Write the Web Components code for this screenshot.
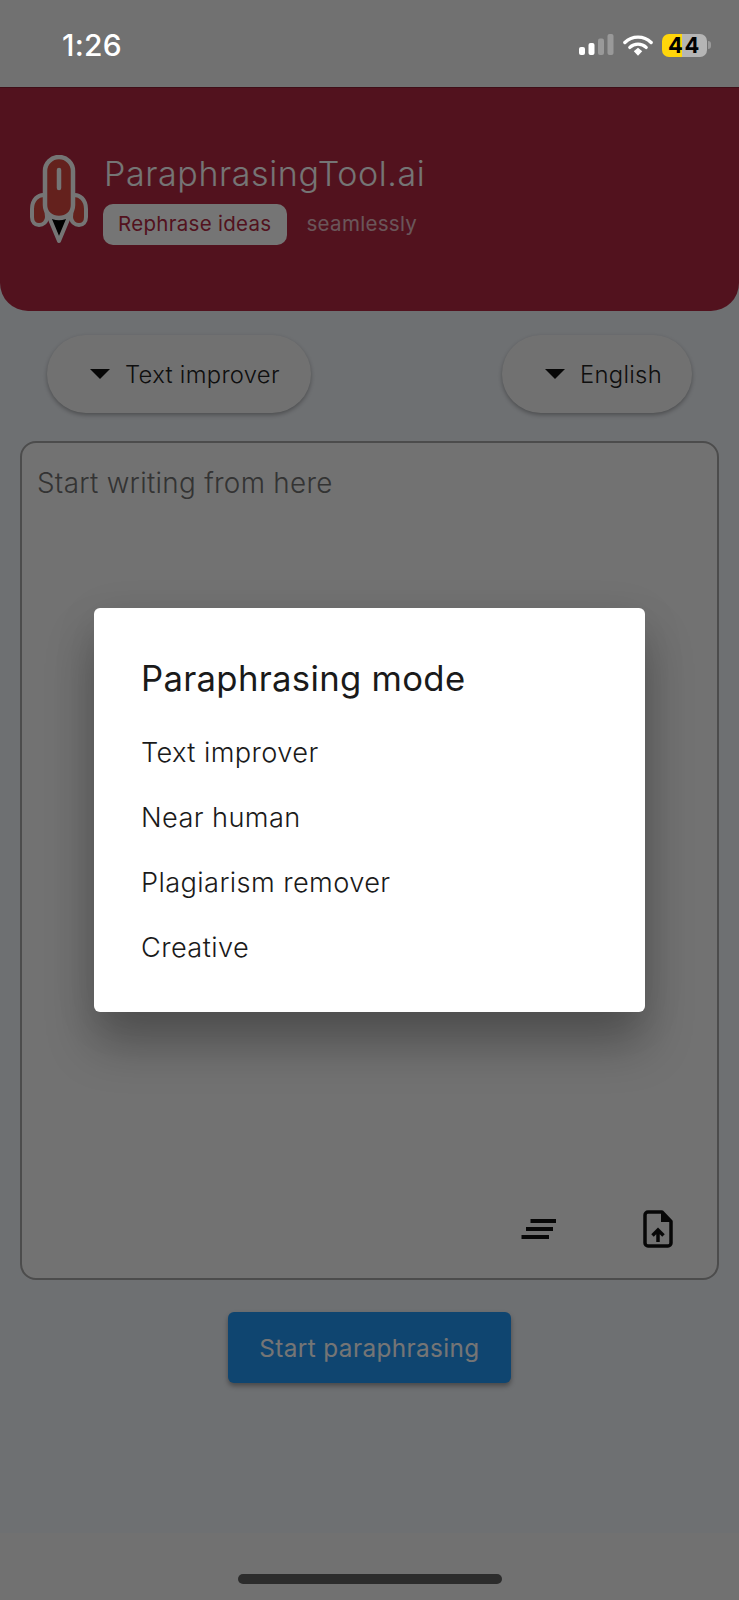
<!DOCTYPE html>
<html lang="en"><head><meta charset="utf-8"><title>ParaphrasingTool.ai</title>
<style>
html,body{margin:0;padding:0;background:#eff3f8}
body{font-family:Inter,"Liberation Sans",sans-serif;width:739px;height:1600px;overflow:hidden}
</style></head><body>
<app-screen>
  <status-bar slot="status" time="1:26" level="44"></status-bar>
  <brand-header slot="header" title-text="ParaphrasingTool.ai" chip="Rephrase ideas" tail="seamlessly"></brand-header>
  <div slot="tools" style="display:contents">
    <drop-pill label="Text improver" style="width:264px"></drop-pill>
    <drop-pill label="English" style="width:190px"></drop-pill>
  </div>
  <text-panel slot="panel" placeholder="Start writing from here"></text-panel>
  <primary-button slot="action" label="Start paraphrasing"></primary-button>
  <home-bar slot="home"></home-bar>
  <modal-scrim slot="modal">
    <mode-dialog heading="Paraphrasing mode">
      <mode-option>Text improver</mode-option>
      <mode-option>Near human</mode-option>
      <mode-option>Plagiarism remover</mode-option>
      <mode-option>Creative</mode-option>
    </mode-dialog>
  </modal-scrim>
</app-screen>
<script>
function def(name, render){
  customElements.define(name, class extends HTMLElement{
    constructor(){super();this.attachShadow({mode:'open'});}
    connectedCallback(){this.shadowRoot.innerHTML=render(this);}
  });
}
def('app-screen',()=>`<style>
:host{display:flex;flex-direction:column;position:relative;width:739px;height:1600px;background:#eff3f8;overflow:hidden}
.tools{display:flex;justify-content:space-between;padding:24px 47px 28px}
.panelwrap{padding:0 20px 0 20px}
.action{display:flex;justify-content:center;padding-top:32px;flex:1}
</style>
<slot name="status"></slot><slot name="header"></slot>
<div class="tools"><slot name="tools"></slot></div>
<div class="panelwrap"><slot name="panel"></slot></div>
<div class="action"><slot name="action"></slot></div>
<slot name="home"></slot><slot name="modal"></slot>`);

def('status-bar',el=>`<style>
:host{display:flex;align-items:center;justify-content:space-between;height:87px;background:#717171;position:relative;z-index:3;box-sizing:border-box;padding:0 28px 0 62px;color:#fff}
.time{font:500 30px/1 Inter,"Liberation Sans",sans-serif;margin-top:3px;letter-spacing:.2px}
.right{display:flex;align-items:center;margin-top:3px}
svg{display:block}
.bat{position:relative;width:45px;height:23px;border-radius:7px;background:linear-gradient(90deg,#ffd60a 0 20px,#b5b5b5 20px);margin-left:9px;display:flex;align-items:center;justify-content:center;color:#000;font:700 22px/1 Inter,"Liberation Sans",sans-serif;letter-spacing:1.500px}
.nub{width:3px;height:8px;background:#9a9a9a;border-radius:0 3px 3px 0;margin-left:1px}
</style>
<span class="time">${el.getAttribute('time')}</span>
<div class="right">
<svg width="35" height="22" viewBox="0 0 35 22"><rect x="0" y="13" width="6" height="8" rx="2" fill="#fff"/><rect x="9.500" y="9" width="6" height="12" rx="2" fill="#fff"/><rect x="19" y="4.500" width="6" height="16.500" rx="2" fill="#999"/><rect x="28.500" y="0" width="6" height="21" rx="2" fill="#999"/></svg>
<svg width="30" height="23" viewBox="0 0 32 23" style="margin-left:9px"><path d="M2 8.300a20 20 0 0 1 28 0" fill="none" stroke="#fff" stroke-width="3.600" stroke-linecap="round"/><path d="M7.300 13.500a12.500 12.500 0 0 1 17.400 0" fill="none" stroke="#fff" stroke-width="3.600" stroke-linecap="round"/><path d="M11.500 17.500l4.500-3.700 4.500 3.700-4.500 4.800z" fill="#fff"/></svg>
<span class="bat">${el.getAttribute('level')}</span><span class="nub"></span>
</div>`);

def('brand-header',el=>`<style>
:host{display:flex;align-items:flex-start;height:224px;box-sizing:border-box;padding:67px 0 0 30px;background:#b42943;border-top:1px solid #8a1f33;border-radius:0 0 28px 28px}
svg{display:block;flex:none}
.col{margin-left:13px;display:flex;flex-direction:column;align-items:flex-start}
.t{font:350 34px/38px Inter,"Liberation Sans",sans-serif;color:#fff;letter-spacing:.6px;margin-left:1px}
.row{display:flex;align-items:center;margin-top:11px}
.chip{background:#fff;color:#b42943;border-radius:10px;height:41px;display:flex;align-items:center;padding:0 15px;font:400 20.500px/1 Inter,"Liberation Sans",sans-serif;letter-spacing:.3px}
.tail{margin-left:20px;color:rgba(255,255,255,.7);font:400 20.500px/1 Inter,"Liberation Sans",sans-serif;letter-spacing:.3px}
</style>
<svg width="60" height="90" viewBox="0 0 60 90">
<path d="M15 40c-7-1-13 5-13 14v8c0 5 3 8 7 8s8-3 8-8z M43 40c7-1 13 5 13 14v8c0 5-3 8-7 8s-8-3-8-8z" fill="#d9483f" stroke="#fff" stroke-width="4" stroke-linejoin="round"/>
<path d="M19 62l10 24 10-24z" fill="#000" stroke="#fff" stroke-width="4" stroke-linejoin="round"/>
<path d="M15 16a14 14 0 0 1 28 0v34c0 8-6 13-14 13s-14-5-14-13z" fill="#d9483f" stroke="#fff" stroke-width="4.500"/>
<path d="M29 15v18" stroke="#fff" stroke-width="4.500" stroke-linecap="round"/>
</svg>
<div class="col"><div class="t">${el.getAttribute('title-text')}</div>
<div class="row"><span class="chip">${el.getAttribute('chip')}</span><span class="tail">${el.getAttribute('tail')}</span></div></div>`);

def('drop-pill',el=>`<style>
:host{display:flex;align-items:center;height:78px;box-sizing:border-box;padding-left:43px;border-radius:39px;background:#f7f7f7;box-shadow:0 2px 4px rgba(0,0,0,.3);color:#222}
i{width:0;height:0;border-left:10px solid transparent;border-right:10px solid transparent;border-top:10px solid #111;margin-right:15px}
span{font:350 23.800px/1 Inter,"Liberation Sans",sans-serif;letter-spacing:.3px;margin-top:1px}
</style><i></i><span>${el.getAttribute('label')}</span>`);

def('text-panel',el=>`<style>
:host{display:flex;flex-direction:column;height:839px;box-sizing:border-box;padding:24px 15px 30px;border:2px solid #a6a6a6;border-radius:16px;background:#f8f8f8}
.ph{font:350 27.800px/32px Inter,"Liberation Sans",sans-serif;color:#707070;letter-spacing:.3px}
.icons{margin-top:auto;display:flex;justify-content:flex-end;align-items:center;gap:86px;padding-right:29px}
svg{display:block}
</style>
<div class="ph">${el.getAttribute('placeholder')}</div>
<div class="icons">
<svg width="36" height="22" viewBox="0 0 36 22"><path d="M9.500 3H35M5 11h27M0.500 19H28" stroke="#111" stroke-width="4"/></svg>
<svg width="30" height="38" viewBox="0 0 30 38"><path d="M5 2h14l9 9.500V33a3 3 0 0 1-3 3H5a3 3 0 0 1-3-3V5a3 3 0 0 1 3-3z" fill="none" stroke="#111" stroke-width="3.500" stroke-linejoin="round"/><path d="M18 2l10 10H18z" fill="#111"/><path d="M15 32V21M9.500 25.500L15 20l5.500 5.500" fill="none" stroke="#111" stroke-width="3.500"/></svg>
</div>`);

def('primary-button',el=>`<style>
:host{display:flex;align-items:center;justify-content:center;width:283px;height:71px;border-radius:6px;background:#2196f3;color:#fff;box-shadow:0 3px 5px rgba(0,0,0,.35);font:400 24.300px/1 Inter,"Liberation Sans",sans-serif;letter-spacing:.4px;padding-top:1px;box-sizing:border-box}
</style>${el.getAttribute('label')}`);

def('home-bar',()=>`<style>
:host{display:flex;align-items:flex-start;justify-content:center;height:67px;background:#717171;position:relative;z-index:3;box-sizing:border-box;padding-top:41px}
i{display:block;width:264px;height:10px;border-radius:5px;background:#2c2c2c}
</style><i></i>`);

def('modal-scrim',()=>`<style>
:host{position:absolute;inset:0;z-index:2;background:rgba(0,0,0,.54);display:flex;align-items:center;justify-content:center;padding-top:20px;box-sizing:border-box}
</style><slot></slot>`);

def('mode-dialog',el=>`<style>
:host{display:block;width:551px;height:404px;box-sizing:border-box;background:#fff;border-radius:6px;padding:48px 47px 0;box-shadow:0 32px 48px 0 rgba(0,0,0,.28),0 9px 46px 0 rgba(0,0,0,.08)}
h2{margin:0 0 36px;font:400 34.700px/44px Inter,"Liberation Sans",sans-serif;color:#1a1a1a;letter-spacing:.3px}
</style><h2>${el.getAttribute('heading')}</h2><slot></slot>`);

def('mode-option',()=>`<style>
:host{display:block;height:65px;font:350 27.200px/34px Inter,"Liberation Sans",sans-serif;color:#1a1a1a;letter-spacing:.4px}
</style><slot></slot>`);
</script>
</body></html>
